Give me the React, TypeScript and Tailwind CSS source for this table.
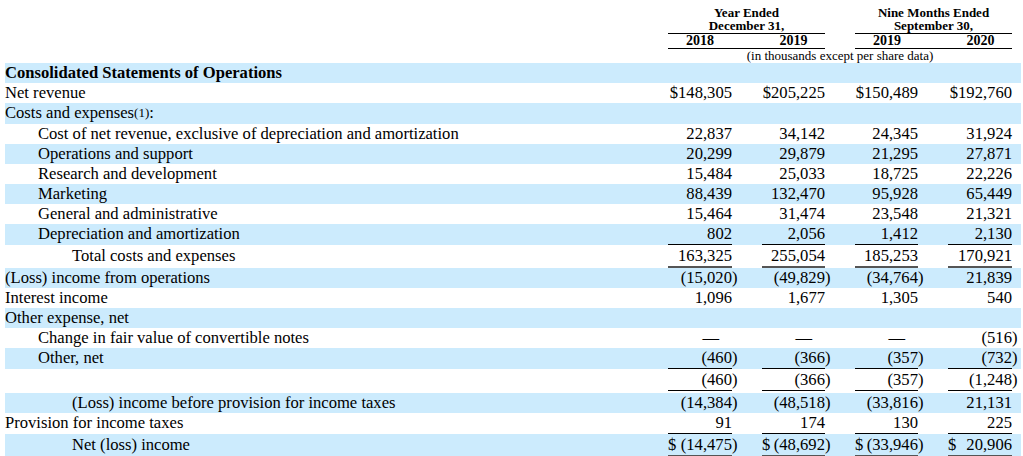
import { Fragment } from "react";
import { clsx as cn } from "clsx";

type Line = "single" | "double";

type Row = {
  label: string;
  note?: string;
  indent?: 0 | 1 | 2;
  bold?: boolean;
  values?: string[];
  dollar?: boolean;
  line?: Line;
  pad?: string;
};

const STRIPE = "bg-[#ccebfd]";

const ROWS: Row[] = [
  { label: "Consolidated Statements of Operations", bold: true },
  {
    label: "Net revenue",
    values: ["$148,305", "$205,225", "$150,489", "$192,760"],
  },
  { label: "Costs and expenses", note: "(1)" },
  {
    label: "Cost of net revenue, exclusive of depreciation and amortization",
    indent: 1,
    values: ["22,837", "34,142", "24,345", "31,924"],
  },
  {
    label: "Operations and support",
    indent: 1,
    values: ["20,299", "29,879", "21,295", "27,871"],
  },
  {
    label: "Research and development",
    indent: 1,
    values: ["15,484", "25,033", "18,725", "22,226"],
  },
  {
    label: "Marketing",
    indent: 1,
    values: ["88,439", "132,470", "95,928", "65,449"],
  },
  {
    label: "General and administrative",
    indent: 1,
    values: ["15,464", "31,474", "23,548", "21,321"],
  },
  {
    label: "Depreciation and amortization",
    indent: 1,
    values: ["802", "2,056", "1,412", "2,130"],
    line: "single",
  },
  {
    label: "Total costs and expenses",
    indent: 2,
    values: ["163,325", "255,054", "185,253", "170,921"],
    line: "double",
    pad: "pt-[1px]",
  },
  {
    label: "(Loss) income from operations",
    values: ["(15,020)", "(49,829)", "(34,764)", "21,839"],
  },
  {
    label: "Interest income",
    values: ["1,096", "1,677", "1,305", "540"],
  },
  { label: "Other expense, net" },
  {
    label: "Change in fair value of convertible notes",
    indent: 1,
    values: ["—", "—", "—", "(516)"],
  },
  {
    label: "Other, net",
    indent: 1,
    values: ["(460)", "(366)", "(357)", "(732)"],
    line: "single",
  },
  {
    label: "",
    values: ["(460)", "(366)", "(357)", "(1,248)"],
    line: "single",
    pad: "pt-[1px] pb-[2px]",
  },
  {
    label: "(Loss) income before provision for income taxes",
    indent: 2,
    values: ["(14,384)", "(48,518)", "(33,816)", "21,131"],
  },
  {
    label: "Provision for income taxes",
    values: ["91", "174", "130", "225"],
    line: "single",
  },
  {
    label: "Net (loss) income",
    indent: 2,
    values: ["(14,475)", "(48,692)", "(33,946)", "20,906"],
    dollar: true,
    line: "double",
    pad: "pt-[1px]",
  },
];

const COLS = "grid grid-cols-[64px_63px_63px_64px] gap-x-[30px]";

export default function App() {
  return (
    <div className="h-[456px] w-[1023px] overflow-hidden bg-white font-['Liberation_Serif','Times_New_Roman',serif] text-black">
      <div className="ml-[5px] w-[1016px]">
        <Header />
        {ROWS.map((row, i) => (
          <StatementRow key={i} row={row} striped={i % 2 === 0} />
        ))}
      </div>
    </div>
  );
}

function Header() {
  return (
    <div className="flex h-[63px]">
      <div className="flex-1" />
      <div className="w-[353px] pr-[9px] pt-[6px]">
        <div className={cn(COLS, "text-[13px] font-bold leading-[13px]")}>
          <div className="col-span-2 border-b border-black pb-[1px] text-center">
            Year Ended
            <br />
            December 31,
          </div>
          <div className="col-span-2 border-b border-black pb-[1px] text-center">
            Nine Months Ended
            <br />
            September 30,
          </div>
          <YearPair years={["2018", "2019"]} />
          <YearPair years={["2019", "2020"]} />
        </div>
        <div className="text-center text-[13px] leading-[14px]">
          (in thousands except per share data)
        </div>
      </div>
    </div>
  );
}

function YearPair({ years }: { years: string[] }) {
  return (
    <div className="col-span-2 grid grid-cols-[64px_63px] gap-x-[30px] border-b border-black pb-[1px] text-center text-[14px]">
      {years.map((y) => (
        <span key={y}>{y}</span>
      ))}
    </div>
  );
}

function StatementRow({ row, striped }: { row: Row; striped: boolean }) {
  const indent =
    row.indent === 2 ? "pl-[67px]" : row.indent === 1 ? "pl-[33px]" : "pl-0";

  return (
    <div
      className={cn(
        "flex text-[16.6px] leading-[20px]",
        striped && STRIPE,
        row.pad,
      )}
    >
      <div
        className={cn(
          "flex-1 whitespace-nowrap",
          indent,
          row.bold && "font-bold",
        )}
      >
        {row.label}
        {row.note && (
          <>
            <span className="relative -top-[1px] text-[13px]">{row.note}</span>
            :
          </>
        )}
      </div>
      <div className={cn(COLS, "w-[353px] pr-[9px]")}>
        {row.values?.map((v, j) => (
          <div
            key={j}
            className={cn(
              "flex h-fit items-baseline",
              row.dollar ? "justify-between" : "justify-end",
              row.line === "single" && "border-b border-black",
              row.line === "double" && "border-b-2 border-[#555]",
            )}
          >
            {row.dollar && <span>$</span>}
            <Amount value={v} />
          </div>
        ))}
      </div>
    </div>
  );
}

function Amount({ value }: { value: string }) {
  if (value === "—") return <span className="pr-[13px]">—</span>;
  if (value.startsWith("(") && value.endsWith(")")) {
    return (
      <span>
        {value.slice(0, -1)}
        <span className="-mr-[5.5px]">)</span>
      </span>
    );
  }
  return <Fragment>{value}</Fragment>;
}
